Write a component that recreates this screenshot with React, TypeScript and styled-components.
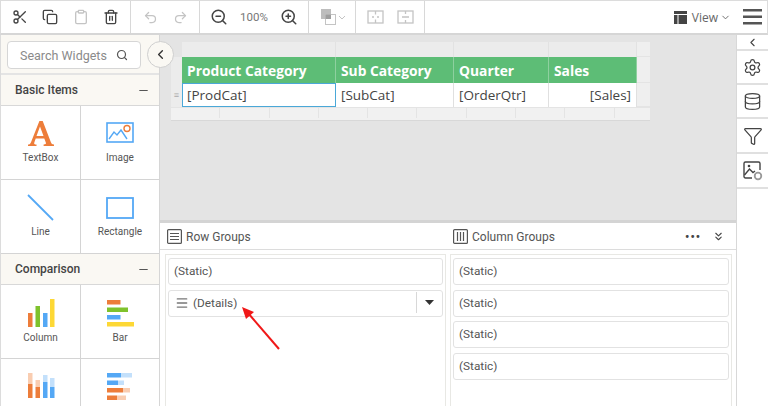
import React from 'react'
import styled, { createGlobalStyle } from 'styled-components'
import { Scissors, Copy, Clipboard, Trash2, Undo2, Redo2, ZoomOut, ZoomIn, ChevronDown, ChevronLeft, ChevronsDown, Search, Minus, Settings, Database, Filter, Menu } from 'lucide-react'

const GlobalStyle = createGlobalStyle`
  html, body {
    margin: 0;
    padding: 0;
    background: #fff;
    overflow: hidden;
  }
  * {
    box-sizing: border-box;
  }
`

const Page = styled.div`
  position: relative;
  width: 768px;
  height: 406px;
  display: flex;
  flex-direction: column;
  overflow: hidden;
  font-family: Roboto, "Liberation Sans", sans-serif;
  color: #555;
`

const Toolbar = styled.div`
  height: 35px;
  flex: none;
  display: flex;
  align-items: stretch;
  border: 1px solid #dcdcdc;
  border-bottom: 2px solid #d6d6d6;
  background: #fff;
`

const ToolGroup = styled.div<{ $width: number }>`
  width: ${p => p.$width}px;
  flex: none;
  display: flex;
  align-items: center;
  justify-content: space-around;
  padding: 0 4px;
  border-right: 1px solid #d8d8d8;
`

const ToolIcon = styled.span<{ $off?: boolean }>`
  display: flex;
  color: ${p => (p.$off ? '#c4c4c4' : '#444')};
`

const Zoom = styled.span`
  font-size: 11.5px;
  color: #777;
`

const ToolRight = styled.div`
  margin-left: auto;
  display: flex;
  align-items: center;
  padding-right: 5px;
`

const ViewLabel = styled.span`
  font-family: "Open Sans", sans-serif;
  font-size: 12px;
  color: #666;
  margin: 0 2px 0 5px;
`

const Hamburger = styled.svg`
  display: block;
  margin-left: 12px;
`

const Body = styled.div`
  flex: 1;
  display: flex;
  min-height: 0;
`

const Sidebar = styled.div`
  width: 160px;
  flex: none;
  display: flex;
  flex-direction: column;
  border-left: 1px solid #dcdcdc;
  border-right: 1px solid #d6d6d6;
  background: #fff;
`

const SearchRow = styled.div`
  height: 40px;
  flex: none;
  padding: 6px 18px 0 6px;
  background: #faf8f3;
  border-bottom: 2px solid #e4e4e4;
`

const SearchBox = styled.div`
  height: 28px;
  display: flex;
  align-items: center;
  justify-content: space-between;
  padding: 0 12px;
  background: #fff;
  border: 1px solid #d6d6d6;
  border-radius: 4px;
  font-size: 12.5px;
  color: #8a8a8a;
  svg {
    color: #555;
  }
`

const SectionHead = styled.div`
  height: 31px;
  flex: none;
  display: flex;
  align-items: center;
  justify-content: space-between;
  padding: 0 9px 0 14px;
  background: #faf8f3;
  border-bottom: 1px solid #d8d8d8;
  font-size: 12px;
  font-weight: 500;
  color: #444;
  svg {
    color: #555;
  }
`

const WidgetGrid = styled.div`
  display: grid;
  grid-template-columns: 80px 78px;
  grid-auto-rows: 74px;
  flex: none;
`

const Widget = styled.div`
  display: flex;
  flex-direction: column;
  align-items: center;
  padding-top: 14px;
  border-right: 1px solid #d4d4d4;
  border-bottom: 1px solid #d4d4d4;
  font-size: 10px;
  color: #555;
  &:nth-child(2n) {
    border-right: 0;
  }
  svg {
    flex: none;
    margin-bottom: 5px;
  }
`

const Main = styled.div`
  flex: 1;
  min-width: 0;
  display: flex;
  flex-direction: column;
`

const Canvas = styled.div`
  position: relative;
  height: 188px;
  flex: none;
  padding: 7px 0 0 11px;
  background: #e4e4e4;
  border-bottom: 3px solid #d4d4d4;
`

const CollapseButton = styled.div`
  position: absolute;
  left: -13px;
  top: 6px;
  width: 27px;
  height: 27px;
  display: flex;
  align-items: center;
  justify-content: center;
  border-radius: 50%;
  background: #faf8f3;
  border: 1px solid #cfcfcf;
  color: #333;
`

const Surface = styled.div`
  display: grid;
  grid-template-columns: 11px 154px 118px 95px 88px 13px;
  grid-template-rows: 15px 26px 24px 14px;
  width: 479px;
`

const TopCell = styled.div<{ $blank?: boolean }>`
  background: ${p => (p.$blank ? 'transparent' : '#ececec')};
  border-right: ${p => (p.$blank ? '0' : '1px solid #e2e2e2')};
`

const EdgeCell = styled.div`
  background: #efefef;
  border-bottom: 1px solid #e4e4e4;
`

const HeadCell = styled.div`
  display: flex;
  align-items: center;
  padding-left: 5px;
  background: #5dbd76;
  border-right: 1px solid #8ed09f;
  font-family: "Open Sans", sans-serif;
  font-size: 13.8px;
  font-weight: 700;
  color: #fff;
  white-space: nowrap;
  &:last-of-type {
    border-right: 0;
  }
`

const Handle = styled.div`
  display: flex;
  align-items: center;
  justify-content: center;
  background: #ececec;
  font-size: 9px;
  color: #aaa;
`

const DataCell = styled.div<{ $selected?: boolean; $right?: boolean }>`
  display: flex;
  align-items: center;
  justify-content: ${p => (p.$right ? 'flex-end' : 'flex-start')};
  padding: 0 5px;
  background: #fff;
  border-right: 1px solid #e0e0e0;
  outline: ${p => (p.$selected ? '1px solid #4aa8d8' : 'none')};
  outline-offset: -1px;
  font-family: "Open Sans", sans-serif;
  font-size: 13.5px;
  color: #444;
  white-space: nowrap;
`

const BottomBand = styled.div`
  grid-column: 1 / -1;
  display: grid;
  grid-template-columns: repeat(10, 49.3px) 1fr;
  background: #f1f1f1;
  border-bottom: 1px solid #d8d8d8;
`

const BandCell = styled.div`
  border-right: 1px solid #e4e4e4;
  border-top: 1px solid #e4e4e4;
  height: 11px;
  &:last-child {
    border-right: 0;
  }
`

const GroupsPanel = styled.div`
  flex: 1;
  min-height: 0;
  display: flex;
  flex-direction: column;
  background: #fff;
`

const GroupsHead = styled.div`
  height: 27px;
  flex: none;
  display: flex;
  align-items: center;
  padding-top: 1px;
  border-bottom: 1px solid #dcdcdc;
`

const GroupTitle = styled.div<{ $width: number }>`
  width: ${p => p.$width}px;
  flex: none;
  display: flex;
  align-items: center;
  gap: 4px;
  padding-left: 7px;
  font-size: 12px;
  color: #555;
`

const HeadActions = styled.div`
  margin-left: auto;
  display: flex;
  align-items: center;
  gap: 11px;
  padding-right: 11px;
  color: #444;
`

const Dots = styled.span`
  font-size: 12px;
  font-weight: 700;
  letter-spacing: 1px;
  line-height: 1;
  color: #444;
`

const Lists = styled.div`
  flex: 1;
  min-height: 0;
  display: grid;
  grid-template-columns: 281px 282px;
  gap: 4px;
  padding: 4px 4px 0 5px;
`

const ListBox = styled.div`
  display: flex;
  flex-direction: column;
  gap: 4.5px;
  padding: 3px 2px;
  border: 1px solid #e8e8e4;
  border-bottom: 0;
`

const GroupItem = styled.div`
  height: 27px;
  flex: none;
  display: flex;
  align-items: center;
  padding: 0 0 1px 5px;
  background: #fff;
  border: 1px solid #e2e2e2;
  border-radius: 3px;
  font-size: 11.8px;
  color: #555;
`

const DragIcon = styled.span`
  display: flex;
  margin: 0 4px 0 1px;
  color: #777;
`

const Caret = styled.span`
  margin-left: auto;
  width: 26px;
  height: 21px;
  display: flex;
  align-items: center;
  justify-content: center;
  border-left: 1px solid #d8d8d8;
  svg {
    display: block;
  }
`

const RightRail = styled.div`
  width: 32px;
  flex: none;
  display: flex;
  flex-direction: column;
  border-left: 1px solid #d8d8d8;
  background: #fff;
`

const RailItem = styled.div<{ $height: number }>`
  height: ${p => p.$height}px;
  flex: none;
  display: flex;
  align-items: center;
  justify-content: center;
  border-bottom: 2px solid #e0e0e0;
  color: #444;
`

const ArrowOverlay = styled.svg`
  position: absolute;
  left: 238px;
  top: 304px;
`

const columns = ['Product Category', 'Sub Category', 'Quarter', 'Sales']
const rowItems = ['(Static)']
const colItems = ['(Static)', '(Static)', '(Static)', '(Static)']

const TextBoxIcon = () => (
  <svg width="28" height="27" viewBox="0 0 28 27">
    <path d="M1 26v-1.4c1.6-.2 2.3-.7 3-2.4L12.4 1h3.3l8.2 21.3c.6 1.6 1.3 2.1 3.1 2.3V26H16.6v-1.4c2-.1 2.7-.6 2.2-2l-1.5-4.2H8.7l-1.4 4c-.5 1.5.1 2 2.2 2.2V26H1zM9.5 16h7L13 6.4 9.5 16z" fill="#ed7d3a" />
  </svg>
)

const ImageIcon = () => (
  <svg width="28" height="27" viewBox="0 0 28 27">
    <rect x="1" y="3" width="26" height="19" fill="none" stroke="#54a8f5" strokeWidth="1.6" />
    <path d="M3 19l5-7 3 3 4-5 6 9" fill="none" stroke="#54a8f5" strokeWidth="1.4" />
    <circle cx="21" cy="8.5" r="3" fill="#fff" stroke="#ed7d3a" strokeWidth="1.4" />
  </svg>
)

const LineIcon = () => (
  <svg width="28" height="27" viewBox="0 0 28 27">
    <line x1="1" y1="1" x2="26" y2="26" stroke="#54a8f5" strokeWidth="1.8" />
  </svg>
)

const RectIcon = () => (
  <svg width="28" height="27" viewBox="0 0 28 27">
    <rect x="1" y="4" width="26" height="20" fill="none" stroke="#54a8f5" strokeWidth="1.8" />
  </svg>
)

const ColumnIcon = () => (
  <svg width="28" height="28" viewBox="0 0 28 28">
    <rect x="1" y="14" width="4.5" height="14" fill="#ed7d3a" />
    <rect x="8.5" y="7" width="4.5" height="21" fill="#7fc22c" />
    <rect x="16" y="14" width="4.5" height="14" fill="#54a8f5" />
    <rect x="23" y="0" width="4.5" height="28" fill="#fdd835" />
  </svg>
)

const BarIcon = () => (
  <svg width="28" height="28" viewBox="0 0 28 28">
    <rect x="1" y="1" width="13.5" height="4.5" fill="#ed7d3a" />
    <rect x="1" y="8.5" width="21" height="4.5" fill="#7fc22c" />
    <rect x="1" y="16" width="13.5" height="4.5" fill="#54a8f5" />
    <rect x="1" y="23" width="27" height="4.5" fill="#fdd835" />
  </svg>
)

const StackColumnIcon = () => (
  <svg width="28" height="28" viewBox="0 0 28 28">
    <rect x="1" y="0" width="4.5" height="11" fill="#f9cdb1" />
    <rect x="1" y="11" width="4.5" height="14" fill="#ed7d3a" />
    <rect x="8.5" y="7" width="4.5" height="7" fill="#f9cdb1" />
    <rect x="8.5" y="14" width="4.5" height="11" fill="#ed7d3a" />
    <rect x="16" y="2" width="4.5" height="7" fill="#c3e0fb" />
    <rect x="16" y="9" width="4.5" height="16" fill="#54a8f5" />
    <rect x="23" y="5" width="4.5" height="9" fill="#c3e0fb" />
    <rect x="23" y="14" width="4.5" height="11" fill="#54a8f5" />
  </svg>
)

const StackBarIcon = () => (
  <svg width="28" height="28" viewBox="0 0 28 28">
    <rect x="1" y="0" width="14" height="4.5" fill="#54a8f5" />
    <rect x="15" y="0" width="11" height="4.5" fill="#c3e0fb" />
    <rect x="1" y="7.5" width="11" height="4.5" fill="#54a8f5" />
    <rect x="12" y="7.5" width="6" height="4.5" fill="#c3e0fb" />
    <rect x="1" y="15" width="16" height="4.5" fill="#ed7d3a" />
    <rect x="17" y="15" width="7" height="4.5" fill="#f9cdb1" />
    <rect x="1" y="22.5" width="10" height="4.5" fill="#ed7d3a" />
    <rect x="11" y="22.5" width="9" height="4.5" fill="#f9cdb1" />
  </svg>
)

const ShapeFillIcon = () => (
  <svg width="25" height="18" viewBox="0 0 25 18">
    <rect x="1" y="1" width="10" height="10" fill="#bdbdbd" />
    <rect x="5.5" y="6.5" width="10" height="10" fill="#fff" stroke="#c4c4c4" />
    <rect x="5.5" y="6.5" width="5.5" height="4.5" fill="#9e9e9e" />
    <path d="M19 8l3 3 3-3" fill="none" stroke="#c4c4c4" />
  </svg>
)

const MergeIcon = () => (
  <svg width="17" height="14" viewBox="0 0 17 14">
    <rect x="1" y="1" width="15" height="12" fill="none" stroke="#c4c4c4" strokeWidth="1.3" />
    <path d="M8.5 1v3.5M8.5 9.5V13M5 7h2M10 7h2" stroke="#c4c4c4" strokeWidth="1.3" />
  </svg>
)

const SplitIcon = () => (
  <svg width="17" height="14" viewBox="0 0 17 14">
    <rect x="1" y="1" width="15" height="12" fill="none" stroke="#c4c4c4" strokeWidth="1.3" />
    <path d="M8.5 1v3M8.5 10v3M5 7h7" stroke="#c4c4c4" strokeWidth="1.3" />
  </svg>
)

const ViewIcon = () => (
  <svg width="13" height="13" viewBox="0 0 13 13">
    <path d="M0 0h13v3H0zM0 4h3.5v9H0zM4.5 4H13v9H4.5z" fill="#444" />
  </svg>
)

const RowGroupIcon = () => (
  <svg width="15" height="15" viewBox="0 0 15 15">
    <rect x=".6" y=".6" width="13.8" height="13.8" rx="1" fill="none" stroke="#555" strokeWidth="1.2" />
    <path d="M3 4.5h9M3 7.5h9M3 10.5h9" stroke="#555" strokeWidth="1.2" />
  </svg>
)

const ColGroupIcon = () => (
  <svg width="15" height="15" viewBox="0 0 15 15">
    <rect x=".6" y=".6" width="13.8" height="13.8" rx="1" fill="none" stroke="#555" strokeWidth="1.2" />
    <path d="M4.5 3v9M7.5 3v9M10.5 3v9" stroke="#555" strokeWidth="1.2" />
  </svg>
)

const PictureSettingsIcon = () => (
  <svg width="20" height="20" viewBox="0 0 20 20">
    <path d="M9 17H2.5A1.5 1.5 0 0 1 1 15.5v-13A1.5 1.5 0 0 1 2.5 1h13A1.5 1.5 0 0 1 17 2.5V9" fill="none" stroke="#444" strokeWidth="1.4" />
    <path d="M1.5 14l5-6 3.5 3.5 2-1.5" fill="none" stroke="#444" strokeWidth="1.4" />
    <circle cx="6" cy="5" r="1.3" fill="#444" />
    <circle cx="15" cy="15" r="3.3" fill="none" stroke="#999" strokeWidth="1.8" />
  </svg>
)

const App: React.FC = () => {
  return (
    <Page>
      <GlobalStyle />
      <Toolbar>
        <ToolGroup $width={130}>
          <ToolIcon><Scissors size={16} /></ToolIcon>
          <ToolIcon><Copy size={16} /></ToolIcon>
          <ToolIcon $off><Clipboard size={16} /></ToolIcon>
          <ToolIcon><Trash2 size={16} /></ToolIcon>
        </ToolGroup>
        <ToolGroup $width={69}>
          <ToolIcon $off><Undo2 size={15} /></ToolIcon>
          <ToolIcon $off><Redo2 size={15} /></ToolIcon>
        </ToolGroup>
        <ToolGroup $width={109}>
          <ToolIcon><ZoomOut size={18} /></ToolIcon>
          <Zoom>100%</Zoom>
          <ToolIcon><ZoomIn size={18} /></ToolIcon>
        </ToolGroup>
        <ToolGroup $width={47}>
          <ShapeFillIcon />
        </ToolGroup>
        <ToolGroup $width={69}>
          <MergeIcon />
          <SplitIcon />
        </ToolGroup>
        <ToolRight>
          <ViewIcon />
          <ViewLabel>View</ViewLabel>
          <ChevronDown size={11} color="#666" />
          <Hamburger width="19" height="16" viewBox="0 0 19 16">
            <path d="M0 0h19v2.5H0zM0 6.5h19V9H0zM0 13h19v2.5H0z" fill="#555" />
          </Hamburger>
        </ToolRight>
      </Toolbar>
      <Body>
        <Sidebar>
          <SearchRow>
            <SearchBox>
              Search Widgets
              <Search size={12} strokeWidth={2.4} />
            </SearchBox>
          </SearchRow>
          <SectionHead>
            Basic Items
            <Minus size={13} strokeWidth={2} />
          </SectionHead>
          <WidgetGrid>
            <Widget><TextBoxIcon />TextBox</Widget>
            <Widget><ImageIcon />Image</Widget>
            <Widget><LineIcon />Line</Widget>
            <Widget><RectIcon />Rectangle</Widget>
          </WidgetGrid>
          <SectionHead>
            Comparison
            <Minus size={13} strokeWidth={2} />
          </SectionHead>
          <WidgetGrid>
            <Widget><ColumnIcon />Column</Widget>
            <Widget><BarIcon />Bar</Widget>
            <Widget><StackColumnIcon /></Widget>
            <Widget><StackBarIcon /></Widget>
          </WidgetGrid>
        </Sidebar>
        <Main>
          <Canvas>
            <CollapseButton><ChevronLeft size={15} strokeWidth={2.2} /></CollapseButton>
            <Surface>
              <TopCell $blank />
              <TopCell />
              <TopCell />
              <TopCell />
              <TopCell />
              <EdgeCell />
              <Handle />
              {columns.map(col => (
                <HeadCell key={col}>{col}</HeadCell>
              ))}
              <EdgeCell />
              <Handle>≡</Handle>
              <DataCell $selected>[ProdCat]</DataCell>
              <DataCell>[SubCat]</DataCell>
              <DataCell>[OrderQtr]</DataCell>
              <DataCell $right>[Sales]</DataCell>
              <EdgeCell />
              <BottomBand>
                {Array.from({ length: 11 }).map((_, i) => (
                  <BandCell key={i} />
                ))}
              </BottomBand>
            </Surface>
          </Canvas>
          <GroupsPanel>
            <GroupsHead>
              <GroupTitle $width={286}><RowGroupIcon />Row Groups</GroupTitle>
              <GroupTitle $width={200}><ColGroupIcon />Column Groups</GroupTitle>
              <HeadActions>
                <Dots>•••</Dots>
                <ChevronsDown size={13} strokeWidth={2} />
              </HeadActions>
            </GroupsHead>
            <Lists>
              <ListBox>
                {rowItems.map((item, i) => (
                  <GroupItem key={i}>{item}</GroupItem>
                ))}
                <GroupItem>
                  <DragIcon><Menu size={14} strokeWidth={2.4} /></DragIcon>
                  (Details)
                  <Caret>
                    <svg width="9" height="5" viewBox="0 0 9 5"><path d="M0 0h9L4.5 5z" fill="#333" /></svg>
                  </Caret>
                </GroupItem>
              </ListBox>
              <ListBox>
                {colItems.map((item, i) => (
                  <GroupItem key={i}>{item}</GroupItem>
                ))}
              </ListBox>
            </Lists>
          </GroupsPanel>
        </Main>
        <RightRail>
          <RailItem $height={16}><ChevronLeft size={13} strokeWidth={2} /></RailItem>
          <RailItem $height={34}><Settings size={19} strokeWidth={1.6} /></RailItem>
          <RailItem $height={34}><Database size={19} strokeWidth={1.6} /></RailItem>
          <RailItem $height={35}><Filter size={20} strokeWidth={1.5} /></RailItem>
          <RailItem $height={35}><PictureSettingsIcon /></RailItem>
        </RightRail>
      </Body>
      <ArrowOverlay width="44" height="48" viewBox="0 0 44 48">
        <path d="M41 45L10 9" stroke="#f01818" strokeWidth="2" />
        <path d="M4 3l12 5-8 7z" fill="#f01818" />
      </ArrowOverlay>
    </Page>
  )
}

export default App
